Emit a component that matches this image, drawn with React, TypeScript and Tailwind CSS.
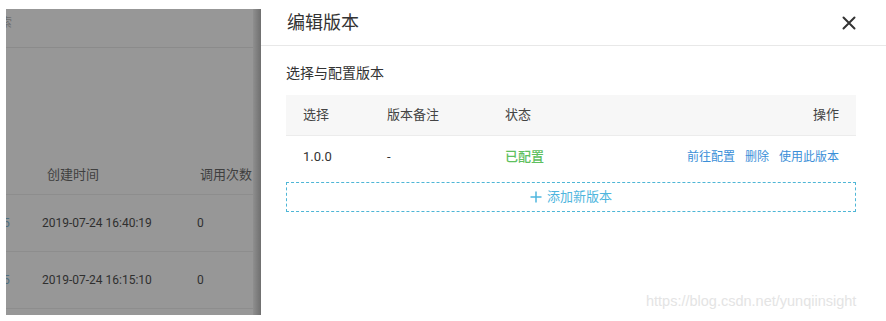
import { useState } from 'react';

const versions = [{ id: '1.0.0', note: '-', status: '已配置' }];

const App = () => {
  const [rows] = useState(versions);
  const font = { fontFamily: 'Roboto, "Noto Sans CJK SC", sans-serif' };

  return (
    <div className="relative w-[886px] h-[321px] flex bg-white overflow-hidden" style={font}>
      {/* Page behind the mask */}
      <div className="w-[261px] pl-[6px] pt-[9px] pb-[6px] shrink-0">
        <div className="h-full flex bg-[#979797] overflow-hidden">
          <div className="flex-1 flex flex-col">
            <div className="h-[39px] flex items-start pt-[5px] border-b border-[#8b8b8b] text-[12px] text-[#6d6d6d]">
              <span className="-ml-[18px]">搜索</span>
            </div>
            <div className="h-[107px]"></div>
            <div className="h-[40px] flex items-center border-b border-[#8d8d8d] text-[13px] text-[#3f3f3f]">
              <span className="ml-[41px] w-[153px]">创建时间</span>
              <span>调用次数</span>
            </div>
            {['2019-07-24 16:40:19', '2019-07-24 16:15:10'].map((d) => (
              <div key={d} className="h-[57px] flex items-center border-b border-[#8d8d8d] text-[12px] text-[#2f2f2f]">
                <span className="w-[39px] -ml-[3px] text-[#4f6f80]">5</span>
                <span className="w-[155px]">{d}</span>
                <span>0</span>
              </div>
            ))}
          </div>
          <div className="w-[8px] bg-gradient-to-r from-[#8f8f8f] to-[#6f6f6f]"></div>
        </div>
      </div>

      {/* Drawer */}
      <div className="flex-1 flex flex-col">
        <div className="h-[46px] flex items-center justify-between pl-[26px] pr-[30px] border-b border-[#e8e8e8]">
          <h1 className="text-[18px] text-[#333]">编辑版本</h1>
          <svg width="14" height="14" viewBox="0 0 14 14" className="text-[#333]">
            <path d="M1.5 1.5 L12.5 12.5 M12.5 1.5 L1.5 12.5" stroke="currentColor" strokeWidth="2" strokeLinecap="round" />
          </svg>
        </div>

        <div className="pl-[25px] pr-[30px] pt-[17px]">
          <h2 className="text-[14px] text-[#333] leading-[20px]">选择与配置版本</h2>

          <div className="mt-[12px]">
            <div className="h-[41px] flex items-center bg-[#f7f7f7] border-b border-[#ececec] text-[13px] text-[#444] px-[17px]">
              <span className="w-[84px]">选择</span>
              <span className="w-[118px]">版本备注</span>
              <span className="flex-1">状态</span>
              <span>操作</span>
            </div>
            {rows.map((r) => (
              <div key={r.id} className="h-[42px] flex items-center text-[13px] text-[#333] px-[17px]">
                <span className="w-[84px]">{r.id}</span>
                <span className="w-[118px]">{r.note}</span>
                <span className="flex-1 text-[#5ec05e] font-medium">{r.status}</span>
                <div className="flex gap-[10px] text-[12px] text-[#3b8fd8]">
                  <span>前往配置</span>
                  <span>删除</span>
                  <span>使用此版本</span>
                </div>
              </div>
            ))}
            <div className="mt-[4px] h-[30px] flex items-center justify-center border border-dashed border-[#4eb6d6] text-[13px] text-[#4fb6de]">
              <svg width="12" height="12" viewBox="0 0 12 12" className="mr-[5px]">
                <path d="M6 0.5 V11.5 M0.5 6 H11.5" stroke="currentColor" strokeWidth="1.5" />
              </svg>
              添加新版本
            </div>
          </div>
        </div>
      </div>

      {/* Watermark */}
      <div
        className="absolute left-[646px] top-[291px] text-[14.5px] text-[#e4e4e4]"
        style={{ fontFamily: '"Liberation Sans", Arial, sans-serif' }}
      >
        https://blog.csdn.net/yunqiinsight
      </div>
    </div>
  );
};

export default App;
